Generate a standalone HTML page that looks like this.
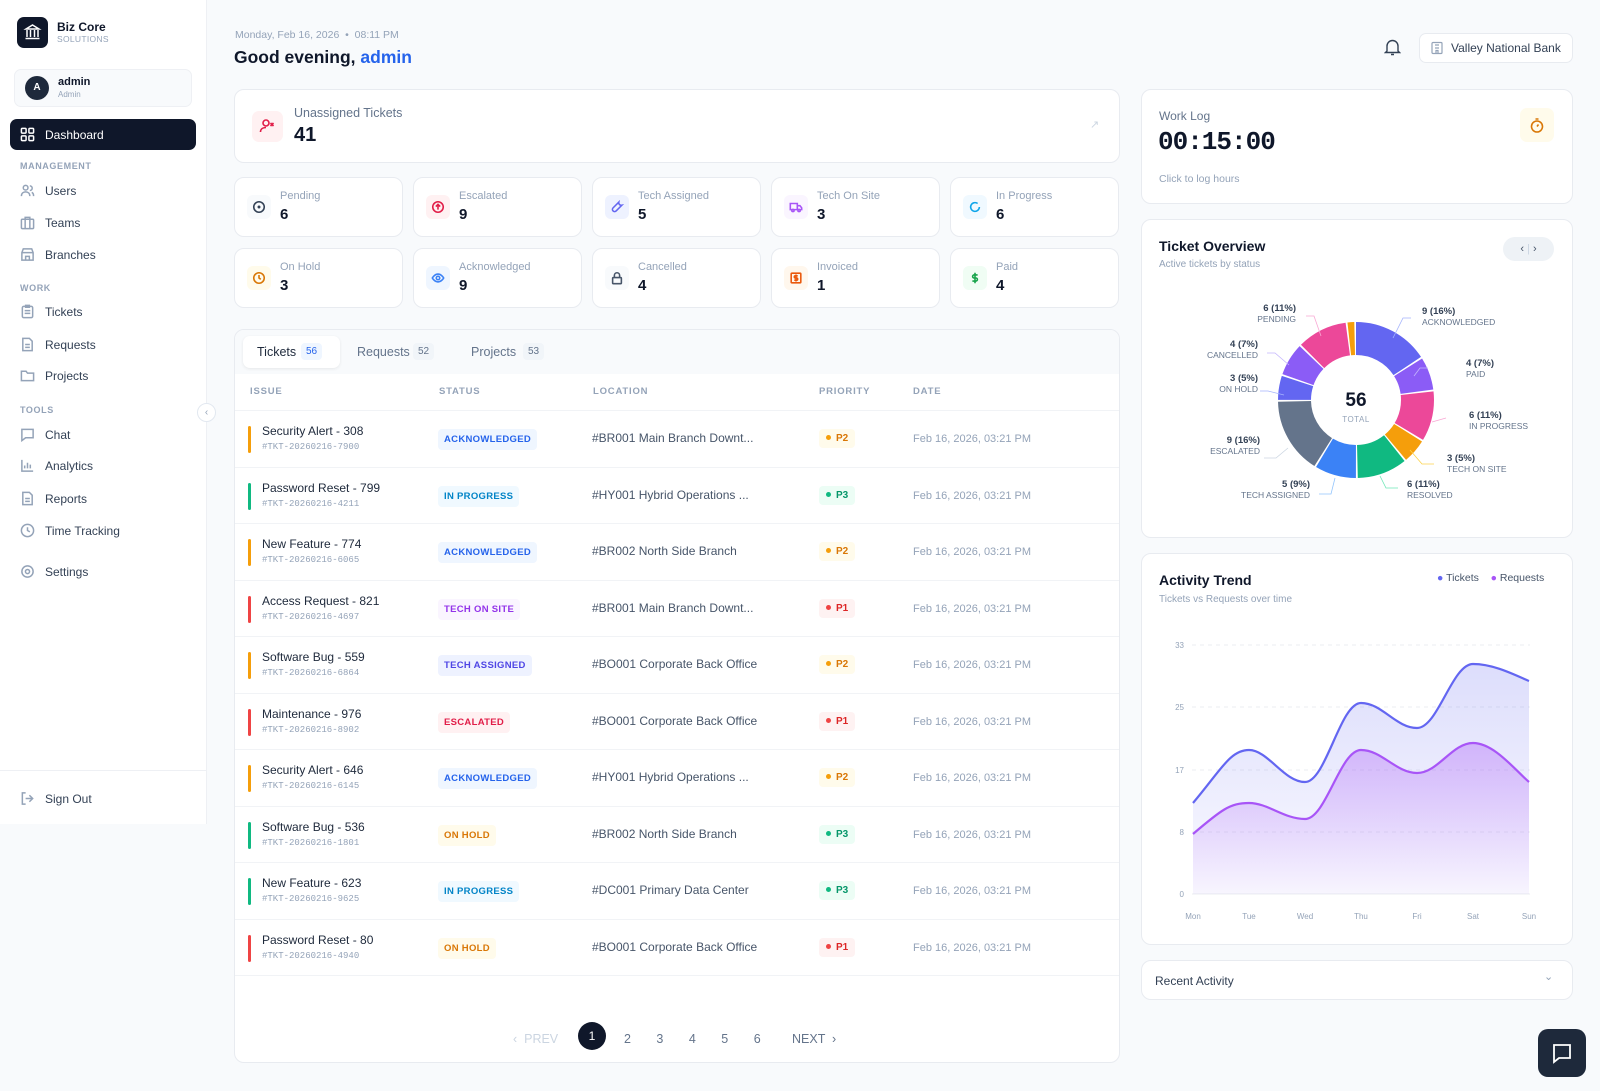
<!DOCTYPE html>
<html><head><meta charset="utf-8"><style>
*{box-sizing:border-box;margin:0;padding:0}
body{width:1600px;height:1091px;background:#f8fafc;font-family:"Liberation Sans",sans-serif;color:#0f172a;position:relative;overflow:hidden}
.abs{position:absolute}
.side{left:0;top:0;width:207px;height:824px;background:#fff;border-right:1px solid #eef0f4}
.logo{left:17px;top:17px;width:31px;height:31px;background:#0f172a;border-radius:7px}
.nav{position:absolute;left:20px;font-size:12px;color:#334155;display:flex;align-items:center;gap:10px}
.nav svg{width:15px;height:15px;stroke:#94a3b8;fill:none;stroke-width:1.6}
.sec{position:absolute;left:20px;font-size:9px;font-weight:bold;color:#94a3b8;letter-spacing:.6px}
.card{position:absolute;background:#fff;border:1px solid #e8ebf0;border-radius:10px}
.stat .ic{position:absolute;left:12px;top:17px;width:24px;height:24px;border-radius:6px;display:flex;align-items:center;justify-content:center}
.stat .ic svg{width:14px;height:14px;fill:none;stroke-width:1.8}
.stat .l{position:absolute;left:45px;top:12px;font-size:11px;color:#94a3b8}
.stat .v{position:absolute;left:45px;top:28px;font-size:15px;font-weight:bold;color:#0f172a}
.row{position:absolute;left:0;width:886px;height:57px;border-top:1px solid #f1f3f6}
.row .bar{position:absolute;left:13px;top:15px;width:3px;height:27px;border-radius:2px}
.row .t{position:absolute;left:27px;top:13px;font-size:12px;color:#1e293b}
.row .id{position:absolute;left:27px;top:31px;font-size:9px;color:#94a3b8;font-family:"Liberation Mono",monospace}
.row .st{position:absolute;left:203px;top:18px;font-size:9.5px;font-weight:bold;padding:5px 6px;border-radius:4px;letter-spacing:.3px}
.row .loc{position:absolute;left:357px;top:20px;font-size:12px;color:#475569}
.row .pr{position:absolute;left:584px;top:18px;font-size:10px;font-weight:bold;padding:4px 7px;border-radius:4px}
.row .pr i{display:inline-block;width:5px;height:5px;border-radius:50%;margin-right:5px;vertical-align:1px}
.row .d{position:absolute;left:678px;top:22px;font-size:11px;color:#94a3b8}
.th{position:absolute;top:56px;font-size:9.5px;font-weight:bold;color:#94a3b8;letter-spacing:.8px}
.dl{font-size:8.5px;color:#64748b;position:absolute;line-height:10px;white-space:nowrap}
.dl b{color:#334155;font-size:9.5px;display:block}
</style></head><body>

<div class="abs side"></div>
<div class="abs logo"><svg width="31" height="31" viewBox="0 0 31 31" fill="none" stroke="#fff" stroke-width="1.5"><path d="M9 12 L15.5 8 L22 12 Z M10 13v7 M13.5 13v7 M17.5 13v7 M21 13v7 M8.5 21.5h14"/></svg></div>
<div class="abs" style="left:57px;top:20px;font-size:12px;font-weight:bold;color:#0f172a">Biz Core</div>
<div class="abs" style="left:57px;top:34px;font-size:8.5px;color:#94a3b8;letter-spacing:.3px">SOLUTIONS</div>
<div class="abs" style="left:14px;top:69px;width:178px;height:38px;background:#f8fafc;border:1px solid #eef0f4;border-radius:7px"></div>
<div class="abs" style="left:25px;top:76px;width:24px;height:24px;border-radius:50%;background:#1e293b;color:#fff;font-size:10px;font-weight:bold;text-align:center;line-height:24px">A</div>
<div class="abs" style="left:58px;top:76px;font-size:11px;font-weight:bold">admin</div>
<div class="abs" style="left:58px;top:90px;font-size:8px;color:#94a3b8">Admin</div>
<div class="abs" style="left:10px;top:119px;width:186px;height:31px;background:#0f172a;border-radius:7px"></div>
<div class="nav" style="top:127px;color:#fff"><svg viewBox="0 0 16 16" style="stroke:#fff"><rect x="1.5" y="1.5" width="5" height="5" rx="1"/><rect x="9.5" y="1.5" width="5" height="5" rx="1"/><rect x="1.5" y="9.5" width="5" height="5" rx="1"/><rect x="9.5" y="9.5" width="5" height="5" rx="1"/></svg>Dashboard</div>
<div class="sec" style="top:161px">MANAGEMENT</div>
<div class="nav" style="top:183px"><svg viewBox="0 0 16 16"><circle cx="6" cy="5" r="2.5"/><path d="M1.5 14c0-3 2-4.5 4.5-4.5S10.5 11 10.5 14M10.5 3a2.5 2.5 0 010 5M12.5 10c1.5.5 2 2 2 4"/></svg>Users</div>
<div class="nav" style="top:215px"><svg viewBox="0 0 16 16"><rect x="1.5" y="4.5" width="13" height="10" rx="1"/><path d="M5.5 4.5v-2h5v2M5.5 4.5v10M10.5 4.5v10"/></svg>Teams</div>
<div class="nav" style="top:247px"><svg viewBox="0 0 16 16"><path d="M2 6l1.5-4h9L14 6v8H2z M2 6h12 M6 14v-4h4v4"/></svg>Branches</div>
<div class="sec" style="top:283px">WORK</div>
<div class="nav" style="top:304px"><svg viewBox="0 0 16 16"><rect x="2.5" y="2.5" width="11" height="12" rx="1.5"/><path d="M6 1.5h4v2H6z M5 7h6M5 10h6"/></svg>Tickets</div>
<div class="nav" style="top:337px"><svg viewBox="0 0 16 16"><path d="M3 1.5h7l3 3v10H3z M5.5 8h5M5.5 11h5"/></svg>Requests</div>
<div class="nav" style="top:368px"><svg viewBox="0 0 16 16"><path d="M1.5 3.5h5l1.5 2h6.5v8h-13z"/></svg>Projects</div>
<div class="sec" style="top:405px">TOOLS</div>
<div class="nav" style="top:427px"><svg viewBox="0 0 16 16"><path d="M2 2.5h12v9H6l-4 3z"/></svg>Chat</div>
<div class="nav" style="top:458px"><svg viewBox="0 0 16 16"><path d="M2 2v12h12M5 11V8M8 11V5M11 11V7"/></svg>Analytics</div>
<div class="nav" style="top:491px"><svg viewBox="0 0 16 16"><path d="M3 1.5h7l3 3v10H3z M5.5 8h5M5.5 11h5"/></svg>Reports</div>
<div class="nav" style="top:523px"><svg viewBox="0 0 16 16"><circle cx="8" cy="8" r="6.5"/><path d="M8 4.5V8l2.5 1.5"/></svg>Time Tracking</div>
<div class="nav" style="top:564px"><svg viewBox="0 0 16 16"><circle cx="8" cy="8" r="2.2"/><circle cx="8" cy="8" r="6"/></svg>Settings</div>
<div class="abs" style="left:0;top:770px;width:206px;border-top:1px solid #eef0f4"></div>
<div class="nav" style="top:791px"><svg viewBox="0 0 16 16"><path d="M6 2H2.5v12H6M10 4.5L13.5 8 10 11.5M13.5 8H6"/></svg>Sign Out</div>
<div class="abs" style="left:197px;top:403px;width:19px;height:19px;border-radius:50%;background:#fff;border:1px solid #e2e8f0;font-size:10px;color:#94a3b8;text-align:center;line-height:17px">‹</div>

<!-- header -->
<div class="abs" style="left:235px;top:29px;font-size:10.5px;color:#94a3b8">Monday, Feb 16, 2026 &nbsp;•&nbsp; 08:11 PM</div>
<div class="abs" style="left:234px;top:47px;font-size:17.5px;font-weight:bold;color:#0f172a">Good evening, <span style="color:#2563eb">admin</span></div>
<svg class="abs" style="left:1384px;top:38px" width="17" height="18" viewBox="0 0 17 18" fill="none" stroke="#334155" stroke-width="1.4"><path d="M3 13V8a5.5 5.5 0 0111 0v5l1.5 1.5h-14z M7 16.5h3"/></svg>
<div class="card" style="left:1419px;top:33px;width:154px;height:30px;border-radius:7px"></div>
<svg class="abs" style="left:1430px;top:41px" width="14" height="14" viewBox="0 0 14 14" fill="none" stroke="#94a3b8" stroke-width="1.2"><rect x="2" y="1.5" width="10" height="11" rx="1"/><path d="M5 4h4M5 7h4M6 12.5v-3h2v3"/></svg>
<div class="abs" style="left:1451px;top:41px;font-size:12px;color:#334155">Valley National Bank</div>

<!-- unassigned -->
<div class="card" style="left:234px;top:89px;width:886px;height:74px"></div>
<div class="abs" style="left:252px;top:111px;width:31px;height:31px;border-radius:7px;background:#fff1f2"><svg width="31" height="31" viewBox="0 0 31 31" fill="none" stroke="#e11d48" stroke-width="1.6"><circle cx="14" cy="12" r="3"/><path d="M8.5 21c0-3 2.5-4.5 5.5-4.5 M18.5 12l3 3M21.5 12l-3 3"/></svg></div>
<div class="abs" style="left:294px;top:106px;font-size:12.5px;color:#64748b">Unassigned Tickets</div>
<div class="abs" style="left:294px;top:124px;font-size:20px;font-weight:bold">41</div>
<div class="abs" style="left:1090px;top:118px;font-size:11px;color:#cbd5e1">↗</div>

<!-- stats -->
<div class="card stat" style="left:234px;top:177px;width:169px;height:60px"><div class="ic" style="background:#f8fafc"><svg viewBox="0 0 16 16" stroke="#334155"><circle cx="8" cy="8" r="6"/><circle cx="8" cy="8" r=".8" fill="#334155"/></svg></div><div class="l">Pending</div><div class="v">6</div></div>
<div class="card stat" style="left:413px;top:177px;width:169px;height:60px"><div class="ic" style="background:#fff1f2"><svg viewBox="0 0 16 16" stroke="#e11d48"><circle cx="8" cy="8" r="6"/><path d="M8 11V5M5.5 7.5L8 5l2.5 2.5"/></svg></div><div class="l">Escalated</div><div class="v">9</div></div>
<div class="card stat" style="left:592px;top:177px;width:169px;height:60px"><div class="ic" style="background:#eef2ff"><svg viewBox="0 0 16 16" stroke="#6366f1"><path d="M10 2.5a3 3 0 003.5 3.5L7 12.5a1.5 1.5 0 01-3.5-3.5L10 2.5z"/></svg></div><div class="l">Tech Assigned</div><div class="v">5</div></div>
<div class="card stat" style="left:771px;top:177px;width:169px;height:60px"><div class="ic" style="background:#faf5ff"><svg viewBox="0 0 16 16" stroke="#a855f7"><path d="M1.5 4h8v7h-8zM9.5 6.5h3l2 2.5v2h-5"/><circle cx="4.5" cy="12" r="1.3"/><circle cx="11.5" cy="12" r="1.3"/></svg></div><div class="l">Tech On Site</div><div class="v">3</div></div>
<div class="card stat" style="left:950px;top:177px;width:169px;height:60px"><div class="ic" style="background:#f0f9ff"><svg viewBox="0 0 16 16" stroke="#0ea5e9"><path d="M13 8a5 5 0 11-2-4"/></svg></div><div class="l">In Progress</div><div class="v">6</div></div>
<div class="card stat" style="left:234px;top:248px;width:169px;height:60px"><div class="ic" style="background:#fffbeb"><svg viewBox="0 0 16 16" stroke="#d97706"><circle cx="8" cy="8" r="6"/><path d="M8 4.5V8l2 1.5"/></svg></div><div class="l">On Hold</div><div class="v">3</div></div>
<div class="card stat" style="left:413px;top:248px;width:169px;height:60px"><div class="ic" style="background:#eff6ff"><svg viewBox="0 0 16 16" stroke="#3b82f6"><path d="M1.5 8s2.5-4.5 6.5-4.5S14.5 8 14.5 8 12 12.5 8 12.5 1.5 8 1.5 8z"/><circle cx="8" cy="8" r="2"/></svg></div><div class="l">Acknowledged</div><div class="v">9</div></div>
<div class="card stat" style="left:592px;top:248px;width:169px;height:60px"><div class="ic" style="background:#f8fafc"><svg viewBox="0 0 16 16" stroke="#475569"><rect x="3" y="7.5" width="10" height="7" rx="1"/><path d="M5 7.5V5a3 3 0 016 0v2.5"/></svg></div><div class="l">Cancelled</div><div class="v">4</div></div>
<div class="card stat" style="left:771px;top:248px;width:169px;height:60px"><div class="ic" style="background:#fff7ed"><svg viewBox="0 0 16 16" stroke="#ea580c"><rect x="2.5" y="2.5" width="11" height="11" rx="1"/><path d="M10 5.5H7a1.3 1.3 0 000 2.5h2a1.3 1.3 0 010 2.5H6M8 4v8"/></svg></div><div class="l">Invoiced</div><div class="v">1</div></div>
<div class="card stat" style="left:950px;top:248px;width:169px;height:60px"><div class="ic" style="background:#f0fdf4"><svg viewBox="0 0 16 16" stroke="#16a34a"><path d="M11 4.5H7a1.7 1.7 0 000 3.5h2a1.7 1.7 0 010 3.5H5M8 2v12"/></svg></div><div class="l">Paid</div><div class="v">4</div></div>

<!-- table -->
<div class="card" style="left:234px;top:329px;width:886px;height:734px;overflow:hidden">
<div class="abs" style="left:0;top:0;width:886px;height:44px;background:#f8fafc"></div>
<div class="abs" style="left:8px;top:6px;width:97px;height:32px;background:#fff;border-radius:7px;box-shadow:0 1px 3px rgba(0,0,0,.08)"></div>
<div class="abs" style="left:22px;top:15px;font-size:12.5px;color:#1e293b">Tickets</div>
<div class="abs" style="left:66px;top:13px;font-size:10px;color:#2563eb;background:#eff6ff;padding:3px 5px;border-radius:4px">56</div>
<div class="abs" style="left:122px;top:15px;font-size:12.5px;color:#64748b">Requests</div>
<div class="abs" style="left:178px;top:13px;font-size:10px;color:#64748b;background:#f1f5f9;padding:3px 5px;border-radius:4px">52</div>
<div class="abs" style="left:236px;top:15px;font-size:12.5px;color:#64748b">Projects</div>
<div class="abs" style="left:288px;top:13px;font-size:10px;color:#64748b;background:#f1f5f9;padding:3px 5px;border-radius:4px">53</div>
<div class="th" style="left:15px">ISSUE</div><div class="th" style="left:204px">STATUS</div><div class="th" style="left:358px">LOCATION</div><div class="th" style="left:584px">PRIORITY</div><div class="th" style="left:678px">DATE</div>

<div class="row" style="top:80px"><div class="bar" style="background:#f59e0b"></div><div class="t">Security Alert - 308</div><div class="id">#TKT-20260216-7900</div><div class="st" style="background:#eff6ff;color:#2563eb">ACKNOWLEDGED</div><div class="loc">#BR001 Main Branch Downt...</div><div class="pr" style="background:#fffbeb;color:#d97706"><i style="background:#f59e0b"></i>P2</div><div class="d">Feb 16, 2026, 03:21 PM</div></div>
<div class="row" style="top:137px"><div class="bar" style="background:#10b981"></div><div class="t">Password Reset - 799</div><div class="id">#TKT-20260216-4211</div><div class="st" style="background:#f0f9ff;color:#0284c7">IN PROGRESS</div><div class="loc">#HY001 Hybrid Operations ...</div><div class="pr" style="background:#ecfdf5;color:#059669"><i style="background:#10b981"></i>P3</div><div class="d">Feb 16, 2026, 03:21 PM</div></div>
<div class="row" style="top:193px"><div class="bar" style="background:#f59e0b"></div><div class="t">New Feature - 774</div><div class="id">#TKT-20260216-6065</div><div class="st" style="background:#eff6ff;color:#2563eb">ACKNOWLEDGED</div><div class="loc">#BR002 North Side Branch</div><div class="pr" style="background:#fffbeb;color:#d97706"><i style="background:#f59e0b"></i>P2</div><div class="d">Feb 16, 2026, 03:21 PM</div></div>
<div class="row" style="top:250px"><div class="bar" style="background:#ef4444"></div><div class="t">Access Request - 821</div><div class="id">#TKT-20260216-4697</div><div class="st" style="background:#faf5ff;color:#9333ea">TECH ON SITE</div><div class="loc">#BR001 Main Branch Downt...</div><div class="pr" style="background:#fef2f2;color:#dc2626"><i style="background:#ef4444"></i>P1</div><div class="d">Feb 16, 2026, 03:21 PM</div></div>
<div class="row" style="top:306px"><div class="bar" style="background:#f59e0b"></div><div class="t">Software Bug - 559</div><div class="id">#TKT-20260216-6864</div><div class="st" style="background:#eef2ff;color:#4f46e5">TECH ASSIGNED</div><div class="loc">#BO001 Corporate Back Office</div><div class="pr" style="background:#fffbeb;color:#d97706"><i style="background:#f59e0b"></i>P2</div><div class="d">Feb 16, 2026, 03:21 PM</div></div>
<div class="row" style="top:363px"><div class="bar" style="background:#ef4444"></div><div class="t">Maintenance - 976</div><div class="id">#TKT-20260216-8902</div><div class="st" style="background:#fff1f2;color:#e11d48">ESCALATED</div><div class="loc">#BO001 Corporate Back Office</div><div class="pr" style="background:#fef2f2;color:#dc2626"><i style="background:#ef4444"></i>P1</div><div class="d">Feb 16, 2026, 03:21 PM</div></div>
<div class="row" style="top:419px"><div class="bar" style="background:#f59e0b"></div><div class="t">Security Alert - 646</div><div class="id">#TKT-20260216-6145</div><div class="st" style="background:#eff6ff;color:#2563eb">ACKNOWLEDGED</div><div class="loc">#HY001 Hybrid Operations ...</div><div class="pr" style="background:#fffbeb;color:#d97706"><i style="background:#f59e0b"></i>P2</div><div class="d">Feb 16, 2026, 03:21 PM</div></div>
<div class="row" style="top:476px"><div class="bar" style="background:#10b981"></div><div class="t">Software Bug - 536</div><div class="id">#TKT-20260216-1801</div><div class="st" style="background:#fffbeb;color:#d97706">ON HOLD</div><div class="loc">#BR002 North Side Branch</div><div class="pr" style="background:#ecfdf5;color:#059669"><i style="background:#10b981"></i>P3</div><div class="d">Feb 16, 2026, 03:21 PM</div></div>
<div class="row" style="top:532px"><div class="bar" style="background:#10b981"></div><div class="t">New Feature - 623</div><div class="id">#TKT-20260216-9625</div><div class="st" style="background:#f0f9ff;color:#0284c7">IN PROGRESS</div><div class="loc">#DC001 Primary Data Center</div><div class="pr" style="background:#ecfdf5;color:#059669"><i style="background:#10b981"></i>P3</div><div class="d">Feb 16, 2026, 03:21 PM</div></div>
<div class="row" style="top:589px;border-bottom:1px solid #f1f3f6"><div class="bar" style="background:#ef4444"></div><div class="t">Password Reset - 80</div><div class="id">#TKT-20260216-4940</div><div class="st" style="background:#fffbeb;color:#d97706">ON HOLD</div><div class="loc">#BO001 Corporate Back Office</div><div class="pr" style="background:#fef2f2;color:#dc2626"><i style="background:#ef4444"></i>P1</div><div class="d">Feb 16, 2026, 03:21 PM</div></div>

<div class="abs" style="left:278px;top:702px;font-size:12.5px;color:#cbd5e1">‹ &nbsp;PREV</div>
<div class="abs" style="left:343px;top:692px;width:28px;height:28px;border-radius:50%;background:#0f172a;color:#fff;font-size:12px;text-align:center;line-height:28px">1</div>
<div class="abs" style="left:389px;top:702px;font-size:12.5px;color:#64748b;word-spacing:22px">2 3 4 5 6</div>
<div class="abs" style="left:557px;top:702px;font-size:12.5px;color:#64748b">NEXT &nbsp;›</div>
</div>

<!-- worklog -->
<div class="card" style="left:1141px;top:89px;width:432px;height:115px"></div>
<div class="abs" style="left:1159px;top:109px;font-size:12px;color:#64748b">Work Log</div>
<div class="abs" style="left:1158px;top:127px;font-size:26px;font-weight:bold;font-family:'Liberation Mono',monospace;color:#0f172a;letter-spacing:-1px">00:15:00</div>
<div class="abs" style="left:1159px;top:173px;font-size:10.5px;color:#94a3b8">Click to log hours</div>
<div class="abs" style="left:1520px;top:108px;width:34px;height:34px;border-radius:7px;background:#fffbeb"><svg width="34" height="34" viewBox="0 0 34 34" fill="none" stroke="#d97706" stroke-width="1.6"><circle cx="17" cy="18.5" r="5.5"/><path d="M15.5 11h3M17 18.5l1.5-2"/></svg></div>

<!-- overview -->
<div class="card" style="left:1141px;top:219px;width:432px;height:319px"></div>
<div class="abs" style="left:1159px;top:238px;font-size:14px;font-weight:bold">Ticket Overview</div>
<div class="abs" style="left:1159px;top:259px;font-size:10px;color:#94a3b8">Active tickets by status</div>
<div class="abs" style="left:1503px;top:237px;width:51px;height:24px;border-radius:12px;background:#eef2f6;font-size:11px;color:#475569;line-height:24px;text-align:center">‹ <span style="color:#cbd5e1">|</span> ›</div>
<svg class="abs" style="left:0;top:0" width="1600" height="1091">
<g transform="rotate(-90 1356 400)" fill="none" stroke-width="33">
<circle cx="1356" cy="400" r="61.5" stroke="#6366f1" stroke-dasharray="60.6 400" stroke-dashoffset="0"/>
<circle cx="1356" cy="400" r="61.5" stroke="#8b5cf6" stroke-dasharray="26.1 400" stroke-dashoffset="-62.1"/>
<circle cx="1356" cy="400" r="61.5" stroke="#ec4899" stroke-dasharray="39.9 400" stroke-dashoffset="-89.7"/>
<circle cx="1356" cy="400" r="61.5" stroke="#f59e0b" stroke-dasharray="19.2 400" stroke-dashoffset="-131.1"/>
<circle cx="1356" cy="400" r="61.5" stroke="#10b981" stroke-dasharray="39.9 400" stroke-dashoffset="-151.8"/>
<circle cx="1356" cy="400" r="61.5" stroke="#3b82f6" stroke-dasharray="33 400" stroke-dashoffset="-193.2"/>
<circle cx="1356" cy="400" r="61.5" stroke="#64748b" stroke-dasharray="60.6 400" stroke-dashoffset="-227.7"/>
<circle cx="1356" cy="400" r="61.5" stroke="#6366f1" stroke-dasharray="19.2 400" stroke-dashoffset="-289.8"/>
<circle cx="1356" cy="400" r="61.5" stroke="#8b5cf6" stroke-dasharray="26.1 400" stroke-dashoffset="-310.5"/>
<circle cx="1356" cy="400" r="61.5" stroke="#ec4899" stroke-dasharray="39.9 400" stroke-dashoffset="-338.1"/>
<circle cx="1356" cy="400" r="61.5" stroke="#f59e0b" stroke-dasharray="5.4 400" stroke-dashoffset="-379.5"/>
</g>
<g fill="none" stroke-width="0.8">
<path d="M1393 338l10-20h8" stroke="#a5b4fc"/><path d="M1414 376l6-8h8" stroke="#c4b5fd"/><path d="M1432 422l14-4" stroke="#f9a8d4"/>
<path d="M1410 450l12 14h12" stroke="#fcd34d"/><path d="M1380 476l6 12h12" stroke="#6ee7b7"/><path d="M1335 478l-4 16h-12" stroke="#93c5fd"/>
<path d="M1288 448l-12 10h-12" stroke="#cbd5e1"/><path d="M1284 395l-16-4h-8" stroke="#a5b4fc"/><path d="M1289 365l-14-12h-8" stroke="#c4b5fd"/><path d="M1321 336l-7-20h-8" stroke="#f9a8d4"/>
</g>
<text x="1356" y="406" text-anchor="middle" font-size="19" font-weight="bold" font-family="Liberation Sans" fill="#0f172a">56</text>
<text x="1356" y="422" text-anchor="middle" font-size="8" font-family="Liberation Sans" fill="#94a3b8" letter-spacing=".5">TOTAL</text>
</svg>
<div class="dl" style="left:1422px;top:307px"><b>9 (16%)</b>ACKNOWLEDGED</div>
<div class="dl" style="left:1466px;top:359px"><b>4 (7%)</b>PAID</div>
<div class="dl" style="left:1469px;top:411px"><b>6 (11%)</b>IN PROGRESS</div>
<div class="dl" style="left:1447px;top:454px"><b>3 (5%)</b>TECH ON SITE</div>
<div class="dl" style="left:1407px;top:480px"><b>6 (11%)</b>RESOLVED</div>
<div class="dl" style="left:1236px;top:480px;text-align:right;width:74px"><b>5 (9%)</b>TECH ASSIGNED</div>
<div class="dl" style="left:1200px;top:436px;text-align:right;width:60px"><b>9 (16%)</b>ESCALATED</div>
<div class="dl" style="left:1200px;top:374px;text-align:right;width:58px"><b>3 (5%)</b>ON HOLD</div>
<div class="dl" style="left:1200px;top:340px;text-align:right;width:58px"><b>4 (7%)</b>CANCELLED</div>
<div class="dl" style="left:1230px;top:304px;text-align:right;width:66px"><b>6 (11%)</b>PENDING</div>

<!-- trend -->
<div class="card" style="left:1141px;top:553px;width:432px;height:392px"></div>
<div class="abs" style="left:1159px;top:572px;font-size:14px;font-weight:bold">Activity Trend</div>
<div class="abs" style="left:1159px;top:594px;font-size:10px;color:#94a3b8">Tickets vs Requests over time</div>
<div class="abs" style="left:1437px;top:572px;font-size:10.5px;color:#475569"><span style="color:#6366f1">●</span> Tickets &nbsp;&nbsp;&nbsp;<span style="color:#a855f7">●</span> Requests</div>
<svg class="abs" style="left:0;top:0" width="1600" height="1091" font-family="Liberation Sans">
<defs><linearGradient id="g1" x1="0" y1="0" x2="0" y2="1"><stop offset="0" stop-color="#6366f1" stop-opacity=".22"/><stop offset="1" stop-color="#6366f1" stop-opacity=".03"/></linearGradient>
<linearGradient id="g2" x1="0" y1="0" x2="0" y2="1"><stop offset="0" stop-color="#a855f7" stop-opacity=".35"/><stop offset="1" stop-color="#a855f7" stop-opacity=".03"/></linearGradient></defs>
<g stroke="#e5e7eb" stroke-dasharray="4 4" stroke-width="0.8">
<line x1="1192" y1="645" x2="1530" y2="645"/><line x1="1192" y1="707" x2="1530" y2="707"/><line x1="1192" y1="770" x2="1530" y2="770"/><line x1="1192" y1="832" x2="1530" y2="832"/><line x1="1192" y1="894" x2="1530" y2="894" stroke-dasharray="0"/>
</g>
<g font-size="8" fill="#94a3b8" text-anchor="end"><text x="1184" y="648">33</text><text x="1184" y="710">25</text><text x="1184" y="773">17</text><text x="1184" y="835">8</text><text x="1184" y="897">0</text></g>
<g font-size="8" fill="#94a3b8" text-anchor="middle"><text x="1193" y="919">Mon</text><text x="1249" y="919">Tue</text><text x="1305" y="919">Wed</text><text x="1361" y="919">Thu</text><text x="1417" y="919">Fri</text><text x="1473" y="919">Sat</text><text x="1529" y="919">Sun</text></g>
<path d="M1193 803C1221 770 1230 750 1249 750S1284 782 1305 782 1340 703 1361 703 1396 728 1417 728 1452 664 1473 664 1515 675 1529 681V894H1193Z" fill="url(#g1)"/>
<path d="M1193 803C1221 770 1230 750 1249 750S1284 782 1305 782 1340 703 1361 703 1396 728 1417 728 1452 664 1473 664 1515 675 1529 681" fill="none" stroke="#6366f1" stroke-width="2.2"/>
<path d="M1193 834C1221 810 1230 803 1249 803S1284 819 1305 819 1340 750 1361 750 1396 773 1417 773 1452 743 1473 743 1515 770 1529 782V894H1193Z" fill="url(#g2)"/>
<path d="M1193 834C1221 810 1230 803 1249 803S1284 819 1305 819 1340 750 1361 750 1396 773 1417 773 1452 743 1473 743 1515 770 1529 782" fill="none" stroke="#a855f7" stroke-width="2.2"/>
</svg>

<!-- recent -->
<div class="card" style="left:1141px;top:960px;width:432px;height:40px"></div>
<div class="abs" style="left:1155px;top:974px;font-size:12px;color:#334155">Recent Activity</div>
<div class="abs" style="left:1544px;top:970px;font-size:11px;color:#94a3b8">⌄</div>

<div class="abs" style="left:1538px;top:1029px;width:48px;height:48px;border-radius:10px;background:#1e293b"><svg width="48" height="48" viewBox="0 0 48 48" fill="none" stroke="#fff" stroke-width="1.8"><path d="M16 16h16v13H21l-5 4z"/></svg></div>
</body></html>
